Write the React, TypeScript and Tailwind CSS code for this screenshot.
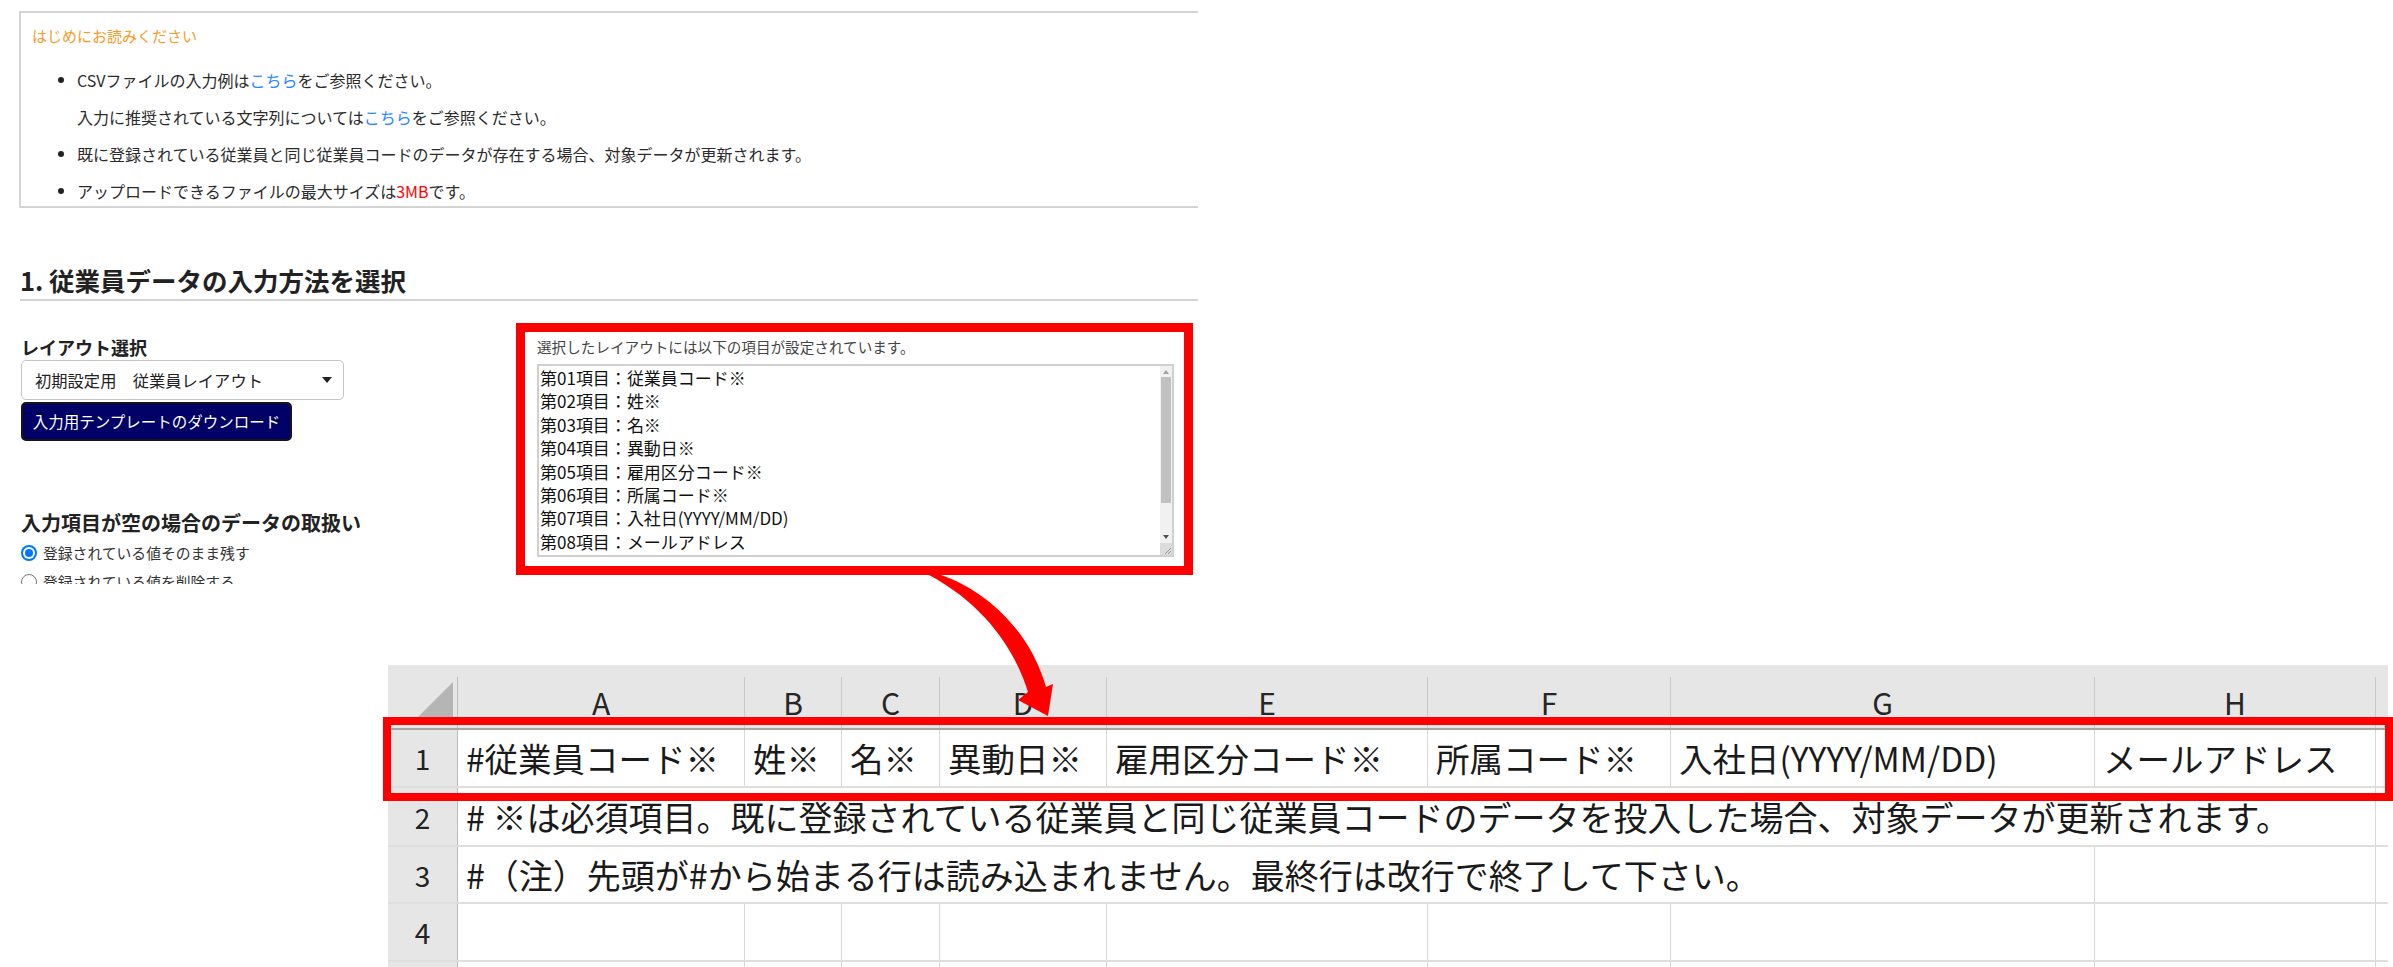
import React from 'react';

const fields = [
  '従業員コード※',
  '姓※',
  '名※',
  '異動日※',
  '雇用区分コード※',
  '所属コード※',
  '入社日(YYYY/MM/DD)',
  'メールアドレス',
];

const cols = [
  { l: 'A', w: 'w-[287px]' },
  { l: 'B', w: 'w-[97px]' },
  { l: 'C', w: 'w-[98px]' },
  { l: 'D', w: 'w-[167px]' },
  { l: 'E', w: 'w-[321px]' },
  { l: 'F', w: 'w-[243px]' },
  { l: 'G', w: 'w-[424px]' },
  { l: 'H', w: 'w-[281px]' },
];

const row1 = ['#従業員コード※', '姓※', '名※', '異動日※', '雇用区分コード※', '所属コード※', '入社日(YYYY/MM/DD)', 'メールアドレス'];

const Dot = () => <span className="ml-[26px] mr-[13px] w-[6px] h-[6px] rounded-full bg-[#222] shrink-0" />;

const Notice = () => (
  <div className="w-[1200px] h-[197px] border-2 border-r-0 border-[#d4d4d4] pl-[11px]">
    <div className="mt-[11px] h-[24px] leading-[24px] text-[15px] text-[#f59c2b]">はじめにお読みください</div>
    <div className="mt-[17px] flex flex-col gap-[7px] text-[16px] text-[#2b2b2b]">
      <div className="h-[30px] flex items-center">
        <Dot />
        <span>CSVファイルの入力例は<span className="text-[#2a86ff]">こちら</span>をご参照ください。</span>
      </div>
      <div className="h-[30px] flex items-center pl-[45px]">
        <span>入力に推奨されている文字列については<span className="text-[#2a86ff]">こちら</span>をご参照ください。</span>
      </div>
      <div className="h-[30px] flex items-center">
        <Dot />
        <span>既に登録されている従業員と同じ従業員コードのデータが存在する場合、対象データが更新されます。</span>
      </div>
      <div className="h-[30px] flex items-center">
        <Dot />
        <span>アップロードできるファイルの最大サイズは<span className="text-[#ff0000]">3MB</span>です。</span>
      </div>
    </div>
  </div>
);

const Radio = ({ checked, label }: { checked?: boolean; label: string }) => (
  <div className="h-[24px] flex items-center gap-[6px]">
    {checked ? (
      <span className="w-[16px] h-[16px] rounded-full bg-[#0075ff] flex items-center justify-center shrink-0">
        <span className="w-[12px] h-[12px] rounded-full bg-white flex items-center justify-center">
          <span className="w-[8px] h-[8px] rounded-full bg-[#0075ff]" />
        </span>
      </span>
    ) : (
      <span className="w-[16px] h-[16px] rounded-full border-[1.5px] border-[#767676] bg-white shrink-0" />
    )}
    <span className="text-[14.8px] text-[#333]">{label}</span>
  </div>
);

const LeftColumn = () => (
  <div className="w-[497px] pl-[2px] shrink-0">
    <div className="mt-[34px] h-[24px] leading-[24px] text-[18px] font-bold text-[#222]">レイアウト選択</div>
    <div className="mt-[1px] w-[323px] h-[40px] border border-[#c4c4c4] rounded-[5px] pl-[13px] pr-[11px] flex items-center justify-between text-[16.3px] text-[#222]">
      <span>初期設定用　従業員レイアウト</span>
      <svg width="10" height="6" viewBox="0 0 10 6">
        <path d="M0 0 L10 0 L5 6 Z" fill="#222" />
      </svg>
    </div>
    <div className="mt-[2px] w-[271px] h-[39px] bg-[#000066] border-2 border-[#151515] rounded-[5px] flex items-center justify-center text-white text-[15.5px]">
      入力用テンプレートのダウンロード
    </div>
    <div className="mt-[69px] h-[26px] leading-[26px] text-[20px] font-bold text-[#222]">入力項目が空の場合のデータの取扱い</div>
    <div className="mt-[5px]">
      <Radio checked label="登録されている値そのまま残す" />
    </div>
    <div className="mt-[5px]">
      <Radio label="登録されている値を削除する" />
    </div>
  </div>
);

const FieldList = () => (
  <div className="mt-[22px] w-[677px] h-[252px] border-[9px] border-[#ff0000] pt-[5px] pl-[12px] pr-[10px] shrink-0">
    <div className="h-[20px] leading-[20px] text-[14.6px] text-[#444]">選択したレイアウトには以下の項目が設定されています。</div>
    <div className="mt-[7px] h-[193px] border-2 border-[#d0d0d0] flex">
      <div className="flex-1 pl-[1px] overflow-hidden text-[17px] leading-[23.4px] text-[#111]">
        {fields.map((f, i) => (
          <div key={f} className="whitespace-nowrap">
            第0{i + 1}項目：{f}
          </div>
        ))}
      </div>
      <div className="w-[12px] bg-[#f1f1f1] flex flex-col">
        <div className="h-[11px] flex items-center justify-center">
          <svg width="6" height="4" viewBox="0 0 6 4">
            <path d="M0 4 L6 4 L3 0 Z" fill="#a3a3a3" />
          </svg>
        </div>
        <div className="h-[126px] mx-[1px] bg-[#c1c1c1]" />
        <div className="flex-1" />
        <div className="h-[12px] flex items-center justify-center">
          <svg width="6" height="4" viewBox="0 0 6 4">
            <path d="M0 0 L6 0 L3 4 Z" fill="#505050" />
          </svg>
        </div>
        <div className="h-[12px] flex items-end justify-end bg-[#dcdcdc]">
          <svg width="10" height="10" viewBox="0 0 10 10">
            <path d="M9 3 L3 9 M9 6 L6 9" stroke="#9a9a9a" strokeWidth="1" />
          </svg>
        </div>
      </div>
    </div>
  </div>
);

const RowHead = ({ n }: { n: number }) => (
  <div className="w-[70px] h-full bg-[#e6e6e6] border-r border-[#bdbdbd] flex items-center justify-center text-[28px] text-[#222]">
    {n}
  </div>
);

const cellText = 'pl-[8px] flex items-center whitespace-nowrap text-[33.5px] text-[#1a1a1a]';
const wideText = 'pl-[8px] flex items-center whitespace-nowrap text-[34px] text-[#1a1a1a]';

const Sheet = () => (
  <div className="mt-[81px] ml-[388px] w-[2000px]">
    {/* column headers */}
    <div className="h-[65px] bg-[#e6e6e6] pt-[12px]">
      <div className="h-[53px] flex border-b-2 border-[#a6a6a6]">
        <div className="w-[70px] border-r border-[#bdbdbd] flex items-end justify-end pr-[4px] pb-[11px]">
          <svg width="35" height="35" viewBox="0 0 35 35">
            <path d="M0 35 L35 35 L35 0 Z" fill="#b5b5b5" />
          </svg>
        </div>
        {cols.map((c) => (
          <div key={c.l} className={`${c.w} border-r border-[#c8c8c8] flex items-center justify-center text-[30px] text-[#262626]`}>
            {c.l}
          </div>
        ))}
        <div className="w-[12px]" />
      </div>
    </div>

    {/* row 1 */}
    <div className="h-[58px] flex border-b-2 border-[#dedede]">
      <RowHead n={1} />
      {cols.map((c, i) => (
        <div key={c.l} className={`${c.w} h-full border-r border-[#d9d9d9] ${cellText}`}>
          {row1[i]}
        </div>
      ))}
      <div className="w-[12px]" />
    </div>

    {/* row 2 */}
    <div className="h-[59px] flex border-b-2 border-[#dedede]">
      <RowHead n={2} />
      <div className={`w-[1918px] h-full border-r border-[#d9d9d9] ${wideText}`}>
        # ※は必須項目。既に登録されている従業員と同じ従業員コードのデータを投入した場合、対象データが更新されます。
      </div>
      <div className="w-[12px]" />
    </div>

    {/* row 3 */}
    <div className="h-[57px] flex border-b-2 border-[#dedede]">
      <RowHead n={3} />
      <div className={`w-[1637px] h-full border-r border-[#d9d9d9] ${wideText}`}>
        #（注）先頭が#から始まる行は読み込まれません。最終行は改行で終了して下さい。
      </div>
      <div className="w-[281px] h-full border-r border-[#d9d9d9]" />
      <div className="w-[12px]" />
    </div>

    {/* rows 4, 5 */}
    {[4, 5].map((n) => (
      <div key={n} className="h-[58px] flex border-b-2 border-[#dedede]">
        <RowHead n={n} />
        {cols.map((c) => (
          <div key={c.l} className={`${c.w} h-full border-r border-[#d9d9d9]`} />
        ))}
        <div className="w-[12px]" />
      </div>
    ))}
  </div>
);

export default function App() {
  return (
    <div className="relative w-[2393px] h-[967px] overflow-hidden bg-white font-['Noto_Sans_CJK_JP','Noto_Sans',sans-serif]">
      <div className="w-[1198px] h-[584px] overflow-hidden pl-[19px] pt-[11px]">
        <Notice />
        <div className="mt-[57px] ml-[1px] w-[1200px] h-[36px] leading-[30px] pb-[4px] border-b-2 border-[#d4d4d4] text-[25.5px] font-bold text-[#222]">
          1. 従業員データの入力方法を選択
        </div>
        <div className="flex">
          <LeftColumn />
          <FieldList />
        </div>
      </div>

      <Sheet />

      {/* highlight round row 1 */}
      <div className="absolute left-[383px] top-[717px] w-[2010px] h-[84px] border-[8px] border-[#ff0000]" />

      {/* curved arrow */}
      <svg className="absolute left-[920px] top-[565px]" width="150" height="160" viewBox="920 565 150 160">
        <path
          d="M929 575 L941 575 C985 590 1030 630 1046 687 L1053 684 L1048 716 L1018 700 L1028 692 C1015 650 985 605 929 575 Z"
          fill="#ff0000"
        />
      </svg>
    </div>
  );
}
